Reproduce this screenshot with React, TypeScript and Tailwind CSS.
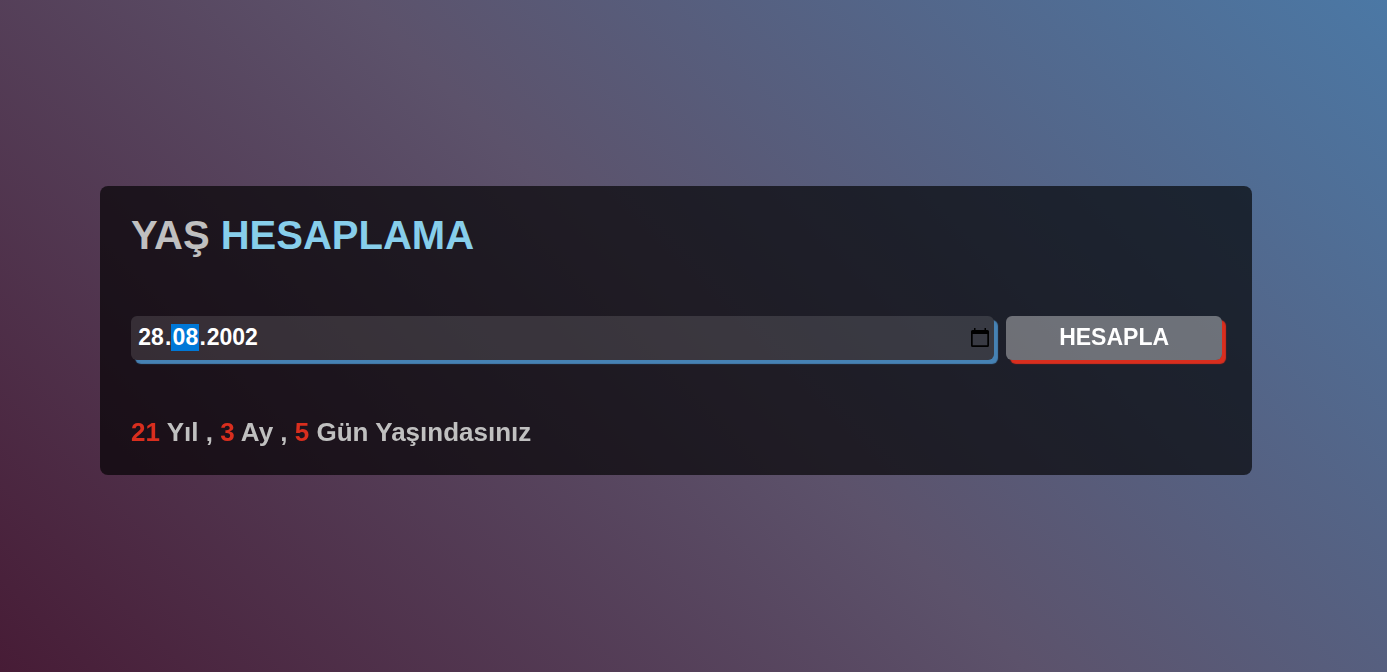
import { useState, type ReactNode } from "react";

const segment =
  "h-[27px] rounded-none border-0 bg-transparent p-0 text-center leading-[27px] text-white caret-transparent outline-none selection:bg-transparent focus:bg-[#0078d7]";

function CalendarIcon() {
  return (
    <svg viewBox="0 0 18 20" className="h-5 w-[18px]" aria-hidden="true">
      <path
        fillRule="evenodd"
        fill="#000"
        d="M3 0h1.5v2h9V0H15v2h1.5A1.5 1.5 0 0 1 18 3.500v14a1.500 1.500 0 0 1-1.500 1.500h-15A1.500 1.500 0 0 1 0 17.500v-14A1.500 1.500 0 0 1 1.500 2H3zM1.700 6v11.300h14.600V6z"
      />
    </svg>
  );
}

function Value({ children }: { children: ReactNode }) {
  return <span className="text-[#d92e1e]">{children}</span>;
}

export default function App() {
  const [day, setDay] = useState("28");
  const [month, setMonth] = useState("08");
  const [year, setYear] = useState("2002");
  const [age, setAge] = useState({ years: 21, months: 3, days: 5 });

  const calculate = () => {
    const now = new Date();
    let years = now.getFullYear() - Number(year);
    let months = now.getMonth() + 1 - Number(month);
    let days = now.getDate() - Number(day);
    if (days < 0) {
      months -= 1;
      days += new Date(now.getFullYear(), now.getMonth(), 0).getDate();
    }
    if (months < 0) {
      years -= 1;
      months += 12;
    }
    setAge({ years, months, days });
  };

  return (
    <div className="flex min-h-screen items-center bg-[linear-gradient(45deg,#471c36_0%,#5c526b_50%,#4b78a5_100%)] pr-[135px] pb-[11px] pl-[100px] font-['Liberation_Sans',Arial,sans-serif] font-bold">
      <main className="flex-1 rounded-lg bg-black/66 pt-[25px] pr-[30px] pb-7 pl-[31px]">
        <h1 className="text-[40px] leading-[48px] text-[#c0c0c0]">
          YAŞ <span className="text-[#87ceeb]">HESAPLAMA</span>
        </h1>
        <div className="mt-[57px] grid grid-cols-[4fr_1fr] gap-3 text-[23px]">
          <div
            role="group"
            aria-label="Doğum tarihi"
            className="flex h-11 min-w-0 items-center rounded-md bg-white/12 pr-[5px] pb-0.5 pl-[6px] text-white shadow-[4px_4px_1px_#4682b4]"
          >
            <input aria-label="Gün" className={`${segment} w-7`} maxLength={2} value={day} onChange={(e) => setDay(e.target.value)} />
            <span>.</span>
            <input aria-label="Ay" autoFocus className={`${segment} w-7`} maxLength={2} value={month} onChange={(e) => setMonth(e.target.value)} />
            <span>.</span>
            <input aria-label="Yıl" className={`${segment} w-[53px]`} maxLength={4} value={year} onChange={(e) => setYear(e.target.value)} />
            <button type="button" aria-label="Takvimi aç" className="ml-auto pt-0.5">
              <CalendarIcon />
            </button>
          </div>
          <button
            type="button"
            onClick={calculate}
            className="h-11 min-w-0 rounded-md bg-white/36 pb-0.5 text-white shadow-[4px_4px_1px_#d92e1e]"
          >
            HESAPLA
          </button>
        </div>
        <p className="mt-[57px] text-[26px] leading-[30px] text-[#c0c0c0]">
          <Value>{age.years}</Value> Yıl , <Value>{age.months}</Value> Ay , <Value>{age.days}</Value> Gün Yaşındasınız
        </p>
      </main>
    </div>
  );
}
